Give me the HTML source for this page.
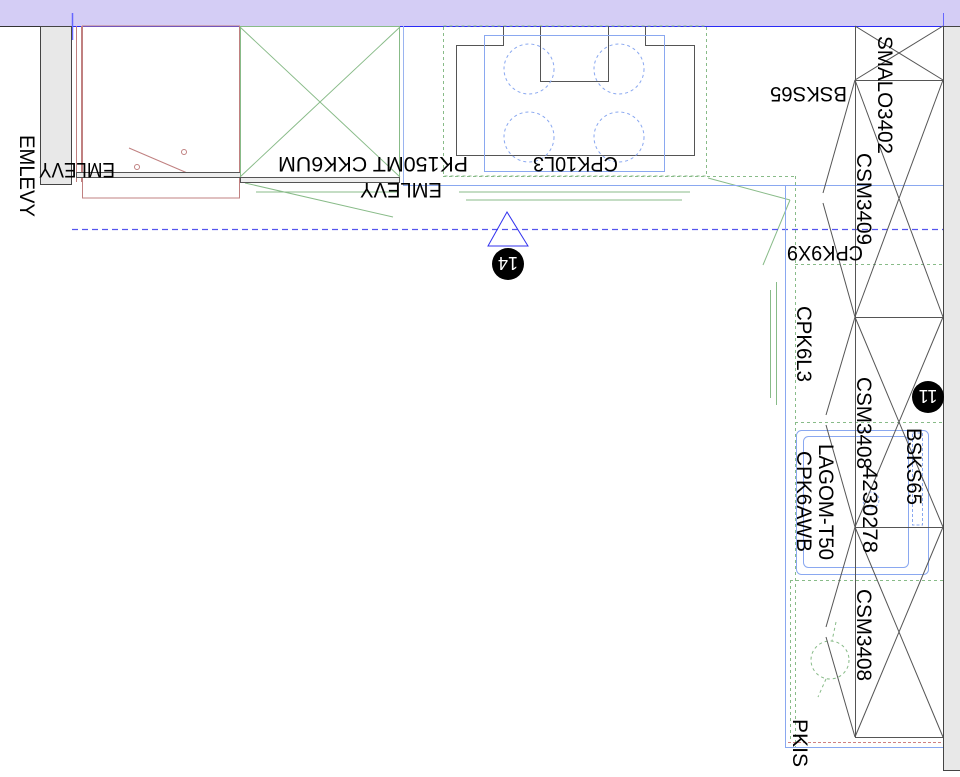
<!DOCTYPE html>
<html><head><meta charset="utf-8"><style>
html,body{margin:0;padding:0;background:#fff;width:960px;height:777px;overflow:hidden}
text{font-family:"Liberation Sans",Arial,sans-serif;font-size:21px;fill:#000}
</style></head><body>
<svg width="960" height="777" viewBox="0 0 960 777" xmlns="http://www.w3.org/2000/svg">
<rect x="0" y="0" width="960" height="26" fill="#d4cdf5"/>
<line x1="0" y1="26.5" x2="72" y2="26.5" stroke="#333"/>
<line x1="943" y1="26.5" x2="960" y2="26.5" stroke="#333"/>
<line x1="72" y1="26.5" x2="943" y2="26.5" stroke="#2a2af5"/>
<line x1="72.5" y1="13" x2="72.5" y2="40" stroke="#6666ff" stroke-width="1.5"/>
<line x1="943.5" y1="13" x2="943.5" y2="36" stroke="#6666ff"/>
<rect x="40.5" y="26.5" width="31" height="158" fill="#e8e8e8" stroke="#444"/>
<g stroke="#c08080" fill="none">
<line x1="76.5" y1="26" x2="76.5" y2="182"/>
<line x1="81.5" y1="26" x2="81.5" y2="182"/>
<rect x="82.5" y="26" width="157" height="172"/>
<line x1="129" y1="148" x2="192" y2="175"/>
<circle cx="137" cy="167" r="2.5"/><circle cx="184" cy="152" r="2.5"/>
</g>
<rect x="76.5" y="172.5" width="164" height="5" fill="#eee" stroke="#555"/>
<g stroke="#88bb88" fill="none">
<rect x="240.5" y="26.5" width="159" height="155"/>
<line x1="240" y1="27" x2="400" y2="177"/><line x1="400" y1="27" x2="240" y2="177"/>
<line x1="245" y1="183" x2="393" y2="217"/>
<line x1="256" y1="192" x2="398" y2="192"/>
<line x1="459" y1="192" x2="690" y2="192"/>
<line x1="466" y1="200" x2="682" y2="200"/>
<line x1="770.5" y1="290" x2="770.5" y2="398"/>
<line x1="776.5" y1="282" x2="776.5" y2="405"/>
<line x1="790" y1="200" x2="763" y2="265"/>
<line x1="708" y1="178" x2="790" y2="200"/>
</g>
<rect x="240.5" y="177.5" width="159" height="5" fill="#eee" stroke="#555"/>
<line x1="403.5" y1="26" x2="403.5" y2="185" stroke="#9ab4f0"/>
<g stroke="#88bb88" fill="none" stroke-dasharray="3,3">
<rect x="443.5" y="26" width="263" height="150"/>
<line x1="443" y1="176.5" x2="795" y2="176.5"/>
<line x1="795.5" y1="176" x2="795.5" y2="748"/>
<line x1="795" y1="264.5" x2="943" y2="264.5"/>
<line x1="795" y1="422.5" x2="943" y2="422.5"/>
<line x1="790" y1="580.5" x2="943" y2="580.5"/>
<line x1="790.5" y1="580" x2="790.5" y2="740"/>
<circle cx="830" cy="660" r="19"/>
<line x1="836" y1="622" x2="832" y2="641"/><line x1="826" y1="679" x2="818" y2="697"/>
</g>
<path d="M503.5 26V45.5H456.5V155.5H694.5V45.5H645.5V26M540.5 26V81.5H608.5V26" fill="none" stroke="#555"/>
<rect x="484.5" y="35.5" width="180" height="136" fill="none" stroke="#8aa8f0"/>
<g fill="none" stroke="#8aa8f0" stroke-dasharray="3,3">
<circle cx="529" cy="69" r="25"/><circle cx="619" cy="69" r="25"/>
<circle cx="529" cy="137" r="25"/><circle cx="619" cy="137" r="25"/>
</g>
<line x1="403" y1="185.5" x2="943" y2="185.5" stroke="#8aa8f0"/>
<line x1="72" y1="229.5" x2="943" y2="229.5" stroke="#5555ee" stroke-dasharray="6,4" stroke-width="1.3"/>
<polygon points="507,212 488,246 528,246" fill="none" stroke="#3333ee"/>
<circle cx="508" cy="264" r="16" fill="#000"/>
<text transform="translate(508,264) rotate(180)" x="0" y="7" text-anchor="middle" style="fill:#fff;font-size:18px">14</text>
<rect x="943.5" y="26.5" width="17" height="744" fill="#e8e8e8" stroke="#444"/>
<line x1="785.5" y1="185" x2="785.5" y2="747" stroke="#8aa8f0"/>
<line x1="785" y1="747.5" x2="943" y2="747.5" stroke="#8aa8f0"/>
<line x1="788" y1="742.5" x2="943" y2="742.5" stroke="#d08080" stroke-dasharray="3,2"/>
<rect x="796.5" y="430.5" width="132" height="144" rx="5" fill="none" stroke="#8aa8f0"/>
<rect x="803.5" y="436.5" width="105" height="131" rx="5" fill="none" stroke="#8aa8f0"/>
<rect x="912.5" y="433" width="10" height="92" fill="none" stroke="#8aa8f0" stroke-dasharray="3,2"/>
<circle cx="871" cy="500" r="8" fill="none" stroke="#8aa8f0" stroke-dasharray="3,2"/>
<g stroke="#555" fill="none">
<line x1="855.5" y1="26" x2="855.5" y2="737"/>
<line x1="855" y1="80.5" x2="943" y2="80.5"/>
<line x1="855" y1="317.5" x2="943" y2="317.5"/>
<line x1="855" y1="527.5" x2="943" y2="527.5"/>
<line x1="855" y1="737.5" x2="943" y2="737.5"/>
<line x1="855" y1="26" x2="943" y2="80"/><line x1="943" y1="26" x2="855" y2="80"/>
<line x1="855" y1="80" x2="943" y2="317"/><line x1="943" y1="80" x2="855" y2="317"/>
<line x1="855" y1="317" x2="943" y2="527"/><line x1="943" y1="317" x2="855" y2="527"/>
<line x1="855" y1="527" x2="943" y2="737"/><line x1="943" y1="527" x2="855" y2="737"/>
<polyline points="855,80 823,193"/><polyline points="823,203 855,317"/>
<polyline points="855,317 826,415"/><polyline points="826,425 855,527"/>
<polyline points="855,527 826,627"/><polyline points="826,637 855,737"/>
</g>
<circle cx="928" cy="397" r="16" fill="#000"/>
<text transform="translate(928,397) rotate(180)" x="0" y="7" text-anchor="middle" style="fill:#fff;font-size:18px">11</text>
<text transform="translate(618,157) rotate(180)" textLength="85" lengthAdjust="spacingAndGlyphs">CPK10L3</text>
<text transform="translate(468,157) rotate(180)" textLength="190" lengthAdjust="spacingAndGlyphs">PK150MT  CKK6UM</text>
<text transform="translate(442,183) rotate(180)" textLength="82" lengthAdjust="spacingAndGlyphs">EMLEVY</text>
<text transform="translate(115,163) rotate(180)" textLength="76" lengthAdjust="spacingAndGlyphs">EMLEVY</text>
<text transform="translate(847,87) rotate(180)" textLength="77" lengthAdjust="spacingAndGlyphs">BSKS65</text>
<text transform="translate(863,246) rotate(180)" textLength="76" lengthAdjust="spacingAndGlyphs">CPK9X9</text>
<text transform="translate(20,135) rotate(90)" textLength="82" lengthAdjust="spacingAndGlyphs">EMLEVY</text>
<text transform="translate(878,36) rotate(90)" textLength="118" lengthAdjust="spacingAndGlyphs">SMALO3402</text>
<text transform="translate(857,153) rotate(90)" textLength="92" lengthAdjust="spacingAndGlyphs">CSM3409</text>
<text transform="translate(797,306) rotate(90)" textLength="76" lengthAdjust="spacingAndGlyphs">CPK6L3</text>
<text transform="translate(857,377) rotate(90)" textLength="92" lengthAdjust="spacingAndGlyphs">CSM3408</text>
<text transform="translate(907,428) rotate(90)" textLength="77" lengthAdjust="spacingAndGlyphs">BSKS65</text>
<text transform="translate(863,467) rotate(90)" textLength="86" lengthAdjust="spacingAndGlyphs">4230278</text>
<text transform="translate(819,444) rotate(90)" textLength="116" lengthAdjust="spacingAndGlyphs">LAGOM-T50</text>
<text transform="translate(797,451) rotate(90)" textLength="101" lengthAdjust="spacingAndGlyphs">CPK6AWB</text>
<text transform="translate(857,589) rotate(90)" textLength="92" lengthAdjust="spacingAndGlyphs">CSM3408</text>
<text transform="translate(793,719) rotate(90)" textLength="48" lengthAdjust="spacingAndGlyphs">PKIS</text>
</svg>
</body></html>
